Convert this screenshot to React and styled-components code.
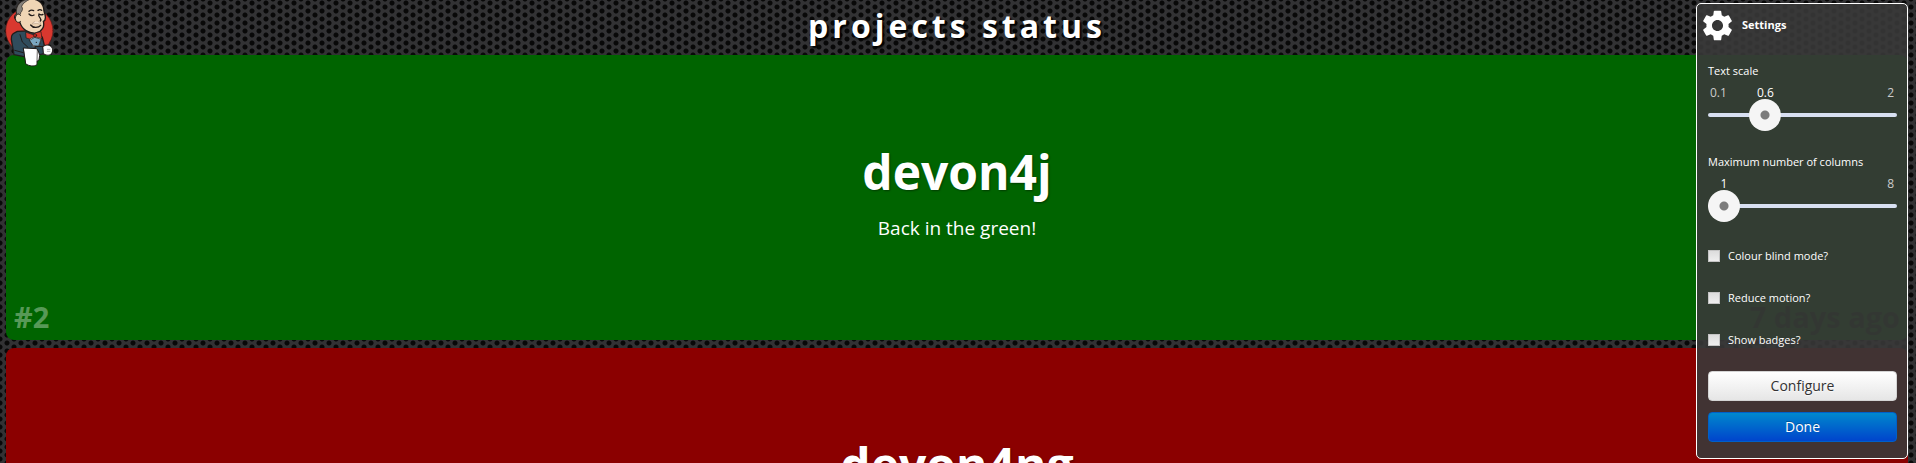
import React, { useState } from "react";
import styled, { createGlobalStyle } from "styled-components";
import { MdSettings } from "react-icons/md";

const GlobalStyle = createGlobalStyle`
  * { box-sizing: border-box; }
  html, body, #root { height: 100%; }
  body {
    margin: 0;
    overflow: hidden;
    color: #fff;
    font-family: "Open Sans", "Noto Sans", sans-serif;
    background-color: #323234;
    background-image:
      radial-gradient(circle at 50% 50%, #080808 2px, transparent 3px),
      radial-gradient(circle at 50% 50%, #080808 2px, transparent 3px);
    background-size: 14px 8px;
    background-position: 0 3px, 7px 7px;
  }
`;

const Page = styled.div`
  height: 100%;
  overflow: hidden;
`;

const Header = styled.header`
  height: 55px;
  display: flex;
  justify-content: center;
  padding: 4px 8px 0 6px;
`;

const Title = styled.h1`
  margin: 0;
  font-size: 32px;
  line-height: 44px;
  letter-spacing: 4px;
  text-shadow: 2px 2px 2px #000;
`;

const LogoLink = styled.a`
  position: absolute;
  top: 0;
  left: 0;
  line-height: 0;
`;

const Projects = styled.main`
  display: grid;
  gap: 8px;
  padding: 0 8px 0 6px;
`;

const Card = styled.article`
  position: relative;
  min-height: 285px;
  display: flex;
  flex-direction: column;
  align-items: center;
  justify-content: center;
  padding-bottom: 12px;
  border-radius: 8px;
  background: ${(p) => (p.$ok ? "#006400" : "#8b0000")};
`;

const CardName = styled.h2`
  margin: 0;
  font-size: 48px;
  line-height: 64px;
  text-shadow: 1px 1px 2px rgba(0, 0, 0, 0.4);
`;

const CardDetail = styled.p`
  margin: 8px 0 0;
  min-height: 32px;
  font-size: 19px;
  line-height: 32px;
`;

const CardFooter = styled.footer`
  position: absolute;
  inset: auto 8px 5px;
  display: flex;
  justify-content: space-between;
  font-size: 29px;
  font-weight: 700;
  line-height: 36px;
`;

const BuildNumber = styled.span`
  color: rgba(255, 255, 255, 0.35);
`;

const Age = styled.time`
  color: #003000;
`;

const Panel = styled.aside`
  position: absolute;
  top: 3px;
  right: 8px;
  width: 212px;
  padding-bottom: 16px;
  border: 1px solid #fff;
  border-radius: 5px;
  background: rgba(56, 56, 56, 0.9);
  font-size: 11px;
`;

const PanelHeader = styled.div`
  height: 42px;
  display: flex;
  align-items: center;
  gap: 6px;
  padding-left: 2px;
`;

const PanelTitle = styled.h3`
  margin: 0;
  font-size: 11px;
  line-height: 16px;
`;

const Form = styled.form`
  display: flex;
  flex-direction: column;
  padding: 15px 10px 0 11px;
`;

const SliderField = styled.div`
  margin-bottom: 21px;
`;

const FieldLabel = styled.label`
  display: block;
  line-height: 20px;
  margin-bottom: 5px;
`;

const Scale = styled.div`
  position: relative;
  display: flex;
  justify-content: space-between;
  padding: 0 3px 0 2px;
  font-size: 12px;
  line-height: 14px;
  color: #ccc;
`;

const Current = styled.output`
  position: absolute;
  top: 0;
  transform: translateX(-50%);
  color: #fff;
`;

const Range = styled.input`
  display: block;
  width: 100%;
  height: 32px;
  margin: -1px 0 0;
  appearance: none;
  background: transparent;

  &::-webkit-slider-runnable-track {
    height: 4px;
    border-radius: 2px;
    background: #d8e0f2;
  }
  &::-webkit-slider-thumb {
    appearance: none;
    width: 32px;
    height: 32px;
    margin-top: -14px;
    border-radius: 50%;
    background: radial-gradient(circle, #7c7c7c 0 4px, #f5f5f5 5px);
  }
`;

const Checks = styled.div`
  display: grid;
  gap: 22px;
  padding: 3px 0 21px;
`;

const CheckLabel = styled.label`
  display: flex;
  align-items: center;
  gap: 8px;
  line-height: 20px;
`;

const Checkbox = styled.input`
  appearance: none;
  width: 12px;
  height: 12px;
  margin: 0;
  border: 1px solid #c4c4c4;
  background: linear-gradient(#dcdcdc, #eee);
  &:checked { background: #06c; }
`;

const Button = styled.button`
  height: 30px;
  padding: 0;
  border: 1px solid ${(p) => (p.$primary ? "#0060c8" : "#d4d4d4")};
  border-radius: 4px;
  font-family: inherit;
  font-size: 14px;
  line-height: 20px;
  color: ${(p) => (p.$primary ? "#fff" : "#333")};
  background: ${(p) =>
    p.$primary ? "linear-gradient(#08c, #04c)" : "linear-gradient(#fff, #e6e6e6)"};
  text-shadow: ${(p) =>
    p.$primary ? "0 -1px 0 rgba(0,0,0,.25)" : "0 1px 1px rgba(255,255,255,.75)"};
`;

const Actions = styled.div`
  display: grid;
  gap: 11px;
`;

function Logo() {
  return (
    <svg width="60" height="68" viewBox="0 0 180 204" role="img" aria-label="Jenkins"
      stroke="#211c1a" strokeWidth="4" strokeLinejoin="round" strokeLinecap="round">
      <ellipse cx="88" cy="92" rx="71" ry="70" fill="#d9382f" stroke="#5d1d19" strokeWidth="2" />
      <path d="M52 94 C40 100 33 102 34 118 L42 164 L72 170 L116 167 L134 140 L127 112 L104 92 Z" fill="#304c5c" />
      <path d="M56 58 C40 64 42 44 50 43 C46 22 58 2 82 -2 C112 -8 132 10 132 34 C137 48 138 61 130 64 C134 78 128 94 108 99 C86 101 66 88 60 68 Z" fill="#efd5b5" />
      <path d="M50 43 C44 16 64 -2 92 -3 C78 3 68 10 65 20 C70 25 67 33 62 38 C62 44 59 45 57 43 Z" fill="#86817b" strokeWidth="2" />
      <path d="M62 46 C52 36 44 48 47 60 C49 68 58 69 62 64" fill="#efd5b5" strokeWidth="3" />
      <path d="M87 42 q7 8 15 3 M117 42 q6 5 12 1 M87 34 q7 -6 14 -2 M114 31 q6 -4 11 0 M116 45 C117 54 127 56 121 63 M92 75 C100 86 116 83 122 76" fill="none" />
      <path d="M104 65 q-7 2 -7 7 q14 -4 25 1 q2 -6 -7 -8" fill="#f7e4cf" strokeWidth="1" stroke="#876c55" />
      <path d="M86 112 L99 140 L117 139 L125 114 L107 106 Z" fill="#fff" strokeWidth="2" />
      <path d="M89 121 L104 112 L123 118 L116 138 L101 137 Z" fill="#7aa7c1" strokeWidth="2" />
      <path d="M78 97 L100 104 L107 98 L123 95 L126 116 L110 112 L102 111 L88 117 L79 114 Z" fill="#d9382f" strokeWidth="2" />
      <circle cx="105" cy="106" r="5" fill="#b8261f" strokeWidth="2" />
      <circle cx="109" cy="127" r="2" fill="#211c1a" stroke="none" />
      <path d="M60 104 L67 126 L84 142 M44 151 L70 158" fill="none" strokeWidth="3" />
      <path d="M106 140 L134 139 L135 160 L112 165 Z" fill="#304c5c" strokeWidth="3" />
      <path d="M129 140 C137 133 146 134 152 139 C160 144 159 155 154 161 C147 168 138 166 131 161 Z" fill="#fff" strokeWidth="3" />
      <path d="M142 148 h8 M142 154 h8" strokeWidth="1" fill="none" />
      <path d="M71 144 L110 146 L115 153 L119 166 L117 180 L111 184 L111 194 C102 200 88 199 78 192 Z" fill="#fff" strokeWidth="3" />
      <path d="M112 150 L111 184" strokeWidth="2" fill="none" />
    </svg>
  );
}

function Slider({ id, label, min, max, step, initial }) {
  const [value, setValue] = useState(initial);
  const ratio = (value - min) / (max - min);
  return (
    <SliderField>
      <FieldLabel htmlFor={id}>{label}</FieldLabel>
      <Scale>
        <span>{value > min ? min : ""}</span>
        <span>{value < max ? max : ""}</span>
        <Current htmlFor={id} style={{ left: `calc(16px + (100% - 32px) * ${ratio})` }}>
          {value}
        </Current>
      </Scale>
      <Range id={id} type="range" min={min} max={max} step={step} value={value}
        onChange={(e) => setValue(Number(e.target.value))} />
    </SliderField>
  );
}

const projects = [
  { name: "devon4j", detail: "Back in the green!", build: "#2", age: "7 days ago", ok: true },
  { name: "devon4ng", ok: false },
];

const options = ["Colour blind mode?", "Reduce motion?", "Show badges?"];

export default function App() {
  return (
    <Page>
      <GlobalStyle />
      <Header>
        <Title>projects status</Title>
      </Header>
      <Projects>
        {projects.map((p) => (
          <Card key={p.name} $ok={p.ok}>
            <CardName>{p.name}</CardName>
            <CardDetail>{p.detail}</CardDetail>
            {p.build && (
              <CardFooter>
                <BuildNumber>{p.build}</BuildNumber>
                <Age>{p.age}</Age>
              </CardFooter>
            )}
          </Card>
        ))}
      </Projects>
      <LogoLink href="#"><Logo /></LogoLink>
      <Panel>
        <PanelHeader>
          <MdSettings size={37} aria-hidden="true" />
          <PanelTitle>Settings</PanelTitle>
        </PanelHeader>
        <Form onSubmit={(e) => e.preventDefault()}>
          <Slider id="text-scale" label="Text scale" min={0.1} max={2} step={0.1} initial={0.6} />
          <Slider id="max-columns" label="Maximum number of columns" min={1} max={8} step={1} initial={1} />
          <Checks>
            {options.map((o) => (
              <CheckLabel key={o}>
                <Checkbox type="checkbox" />
                {o}
              </CheckLabel>
            ))}
          </Checks>
          <Actions>
            <Button type="button">Configure</Button>
            <Button type="submit" $primary>Done</Button>
          </Actions>
        </Form>
      </Panel>
    </Page>
  );
}
